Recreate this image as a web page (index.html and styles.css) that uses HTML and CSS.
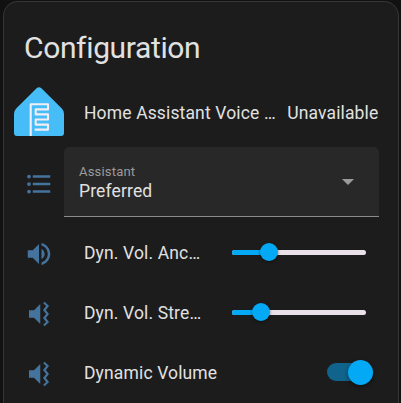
FILE: index.html
```html
<!DOCTYPE html>
<html lang="en">
<head>
<meta charset="utf-8">
<title>Configuration</title>
<link rel="stylesheet" href="styles.css">
</head>
<body>
<main class="card">
  <h1 class="title">Configuration</h1>
  <div class="row device">
    <svg class="logo" viewBox="0 0 50 49">
      <path fill="#46bdf6" d="M22.6 1.2Q25-.9 27.4 1.2L47.8 21.6Q50 23.8 50 27V46Q50 49 47 49H3Q0 49 0 46V27Q0 23.8 2.2 21.6Z"/>
      <path fill="none" stroke="#f2eef4" stroke-width="2.1" stroke-linejoin="round" d="M16.7 49V17.3H34V22.4H21.7V27.4H34V32.5H21.7V37.6H34V42.6H20.7"/>
    </svg>
    <span class="name">Home Assistant Voice …</span>
    <span class="state">Unavailable</span>
  </div>
  <div class="row select-row">
    <svg class="icon" viewBox="0 0 24 24"><path d="M7 5H21V7H7V5M7 13V11H21V13H7M4 4.5A1.5 1.5 0 0 1 5.5 6A1.5 1.5 0 0 1 4 7.5A1.5 1.5 0 0 1 2.5 6A1.5 1.5 0 0 1 4 4.5M4 10.5A1.5 1.5 0 0 1 5.5 12A1.5 1.5 0 0 1 4 13.5A1.5 1.5 0 0 1 2.5 12A1.5 1.5 0 0 1 4 10.5M7 19V17H21V19H7M4 16.5A1.5 1.5 0 0 1 5.5 18A1.5 1.5 0 0 1 4 19.5A1.5 1.5 0 0 1 2.5 18A1.5 1.5 0 0 1 4 16.5Z"/></svg>
    <div class="select">
      <div class="select-text">
        <span class="label">Assistant</span>
        <span class="value">Preferred</span>
      </div>
      <svg class="arrow" viewBox="0 0 12 6"><path d="M0 0H12L6 6Z"/></svg>
    </div>
  </div>
  <div class="row">
    <svg class="icon" viewBox="0 0 24 24"><path d="M14 3.23V5.29C16.89 6.15 19 8.83 19 12C19 15.17 16.89 17.84 14 18.7V20.77C18 19.86 21 16.28 21 12C21 7.72 18 4.14 14 3.23M16.5 12C16.5 10.23 15.5 8.71 14 7.97V16C15.5 15.29 16.5 13.76 16.5 12M3 9V15H7L12 20V4L7 9H3Z"/></svg>
    <span class="name short">Dyn. Vol. Anc…</span>
    <div class="slider anchor"><span class="fill"></span><span class="knob"></span></div>
  </div>
  <div class="row">
    <svg class="icon" viewBox="0 0 24 24"><path d="M4 9V15H8L13 20V4L8 9H4Z"/><path class="wave" d="M15.9 2.8L18.9 5.6L16.3 8.8L18.9 12L16.3 15.2L18.9 18.4L15.9 21.2"/></svg>
    <span class="name short">Dyn. Vol. Stre…</span>
    <div class="slider strength"><span class="fill"></span><span class="knob"></span></div>
  </div>
  <div class="row">
    <svg class="icon" viewBox="0 0 24 24"><path d="M4 9V15H8L13 20V4L8 9H4Z"/><path class="wave" d="M15.9 2.8L18.9 5.6L16.3 8.8L18.9 12L16.3 15.2L18.9 18.4L15.9 21.2"/></svg>
    <span class="name">Dynamic Volume</span>
    <div class="switch"><span class="thumb"></span></div>
  </div>
</main>
</body>
</html>
```
FILE: styles.css
```css
* { box-sizing: border-box; }
html { background: #111; }
body {
  display: flex;
  margin: 0;
  height: 403px;
  overflow: hidden;
  background: #111;
  color: #e1e1e1;
  font-family: Roboto, sans-serif;
  font-size: 17.5px;
  letter-spacing: .14px;
}
.card {
  width: 396px;
  height: 402px;
  margin: 1px 0 0 3px;
  border: 1px solid #363636;
  border-bottom: 0;
  border-radius: 15px 15px 0 0;
  background: #1c1c1c;
}
.title {
  margin: 0;
  padding: 26px 20px 0;
  height: 81px;
  font-size: 30px;
  line-height: 40px;
  font-weight: 400;
  letter-spacing: -.36px;
}
.row {
  display: flex;
  align-items: center;
  height: 60px;
  padding: 0 19px 0 20px;
}
.device { padding-left: 10px; }
.logo { width: 50px; height: 49px; flex: none; margin: -4px 20px 0 0; }
.name {
  flex: 1;
  white-space: nowrap;
  line-height: 24px;
}
.state { margin-right: .6px; }
.icon {
  flex: none;
  width: 30px;
  height: 30px;
  margin: 2px 30px 0 0;
  fill: #44739e;
}
.wave { fill: none; stroke: #44739e; stroke-width: 1.7; }
.select-row { height: 80px; }
.select-row .icon { margin-right: 10px; }
.select {
  flex: 1;
  display: flex;
  align-items: center;
  justify-content: space-between;
  height: 70px;
  margin-top: -2px;
  padding: 0 25px 0 15px;
  border-bottom: 1px solid #8b8b8b;
  border-radius: 5px 5px 0 0;
  background: #282828;
}
.select-text { display: flex; flex-direction: column; }
.label { font-size: 13.1px; line-height: 18px; letter-spacing: .15px; color: #9b9b9b; }
.value { line-height: 20px; }
.arrow { width: 12px; height: 6px; fill: #9b9b9b; }
.name.short { flex: none; width: 118px; }
.slider {
  position: relative;
  width: 134px;
  height: 5px;
  margin: -1px 0 0 30px;
  border-radius: 3px;
  background: #e9e0e9;
}
.fill { display: block; height: 5px; border-radius: 3px 0 0 3px; background: #03a9f4; }
.knob {
  position: absolute;
  top: -7px;
  width: 18px;
  height: 18px;
  border-radius: 50%;
  background: #03a9f4;
  box-shadow: 0 1px 3px rgba(0, 0, 0, .5);
}
.anchor .fill { width: 37px; }
.anchor .knob { left: 28px; }
.strength .fill { width: 28px; }
.strength .knob { left: 19.5px; }
.switch {
  position: relative;
  width: 45px;
  height: 18px;
  margin: -2px 7px 0 0;
  border-radius: 9px;
  background: #10638b;
}
.thumb {
  position: absolute;
  top: -3px;
  right: -1px;
  width: 25px;
  height: 25px;
  border-radius: 50%;
  background: #03a9f4;
  box-shadow: 0 2px 4px rgba(0, 0, 0, .4);
}
```
